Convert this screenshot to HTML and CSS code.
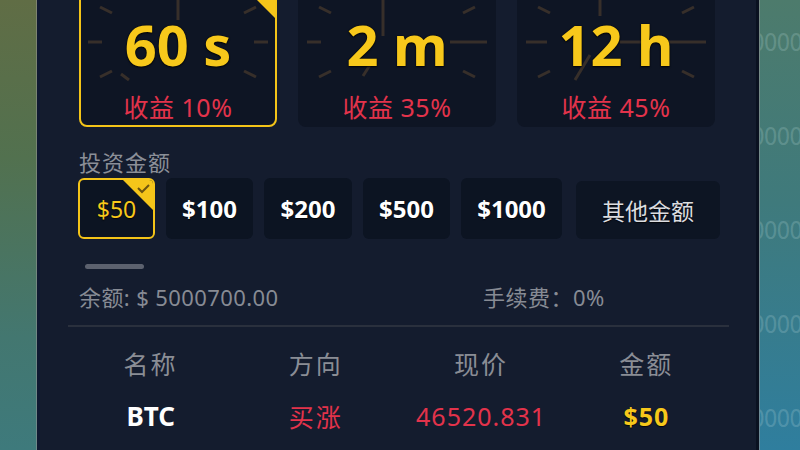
FILE: index.html
```html
<!DOCTYPE html>
<html lang="zh-CN">
<head>
<meta charset="utf-8">
<title>交易</title>
<link rel="stylesheet" href="styles.css">
</head>
<body>
<div class="stage">
  <div class="bg-left"></div>
  <main class="panel">
    <section class="periods">
      <div class="period active">
        <svg class="dial" viewBox="0 0 198 155" width="198" height="155">
          <g class="ticks">
            <line x1="189" y1="70" x2="175" y2="70"/><line x1="177" y1="105" x2="165" y2="99"/>
            <line x1="21" y1="105" x2="33" y2="99"/><line x1="9" y1="70" x2="23" y2="70"/>
            <line x1="21" y1="35" x2="33" y2="41"/><line x1="54" y1="9" x2="61" y2="20"/>
            <line x1="144" y1="9" x2="137" y2="20"/><line x1="177" y1="35" x2="165" y2="41"/>
            <line x1="99" y1="24" x2="99" y2="48"/><line x1="50" y1="108" x2="42" y2="102"/>
          </g>
        </svg>
        <span class="corner big"><svg viewBox="0 0 44 44" width="44" height="44"><polygon points="0,0 44,0 44,44"/><polyline points="24,10 29,15 38,6"/></svg></span>
        <div class="p-label">到期时间</div>
        <div class="p-time">60 s</div>
        <div class="p-rate">收益 10%</div>
      </div>
      <div class="period">
        <svg class="dial" viewBox="0 0 198 155" width="198" height="155">
          <g class="ticks">
            <line x1="189" y1="70" x2="152" y2="70"/><line x1="177" y1="105" x2="165" y2="99"/>
            <line x1="21" y1="105" x2="33" y2="99"/><line x1="9" y1="70" x2="23" y2="70"/>
            <line x1="21" y1="35" x2="33" y2="41"/><line x1="54" y1="9" x2="61" y2="20"/>
            <line x1="144" y1="9" x2="137" y2="20"/><line x1="177" y1="35" x2="165" y2="41"/>
            <line x1="85" y1="20" x2="85" y2="64"/><line x1="72" y1="93" x2="65" y2="104"/>
          </g>
        </svg>
        <div class="p-label">到期时间</div>
        <div class="p-time">2 m</div>
        <div class="p-rate">收益 35%</div>
      </div>
      <div class="period">
        <svg class="dial" viewBox="0 0 198 155" width="198" height="155">
          <g class="ticks">
            <line x1="189" y1="70" x2="150" y2="70"/><line x1="177" y1="105" x2="165" y2="99"/>
            <line x1="21" y1="105" x2="33" y2="99"/><line x1="9" y1="70" x2="30" y2="70"/>
            <line x1="21" y1="35" x2="33" y2="41"/><line x1="54" y1="9" x2="61" y2="20"/>
            <line x1="144" y1="9" x2="137" y2="20"/><line x1="177" y1="35" x2="165" y2="41"/>
            <line x1="83" y1="20" x2="83" y2="44"/><line x1="103" y1="70" x2="138" y2="70"/>
            <line x1="73" y1="83" x2="58" y2="108"/>
          </g>
        </svg>
        <div class="p-label">到期时间</div>
        <div class="p-time">12 h</div>
        <div class="p-rate">收益 45%</div>
      </div>
    </section>

    <div class="sec-label">投资金额</div>
    <div class="amounts">
      <button class="amt active w77">$50<span class="corner small"><svg viewBox="0 0 30 30" width="30" height="30"><polygon points="0,0 30,0 30,30"/><polyline points="15,8 19,12 26,5"/></svg></span></button>
      <button class="amt w87">$100</button>
      <button class="amt w88">$200</button>
      <button class="amt w87">$500</button>
      <button class="amt w101">$1000</button>
      <button class="amt other">其他金额</button>
    </div>

    <div class="slider"></div>

    <div class="info">
      <span class="balance">余额: $ 5000700.00</span>
      <span class="fee">手续费：0%</span>
    </div>

    <div class="sep"></div>

    <div class="table">
      <div class="th">名称</div>
      <div class="th">方向</div>
      <div class="th">现价</div>
      <div class="th">金额</div>
      <div class="td name">BTC</div>
      <div class="td up">买涨</div>
      <div class="td price">46520.831</div>
      <div class="td amount">$50</div>
    </div>
  </main>
  <div class="bg-right">
    <div class="ghost">0000000</div>
    <div class="ghost">0000000</div>
    <div class="ghost">0000000</div>
    <div class="ghost">0000000</div>
    <div class="ghost">0000000</div>
  </div>
</div>
</body>
</html>
```

FILE: styles.css
```css
* { box-sizing: border-box; }

html, body {
  margin: 0;
  padding: 0;
  width: 800px;
  height: 450px;
  overflow: hidden;
  background: #141c2d;
  font-family: "Noto Sans", "Noto Sans CJK SC", sans-serif;
}

.stage {
  display: flex;
  width: 800px;
  height: 450px;
  overflow: hidden;
}

.bg-left {
  width: 37px;
  flex: none;
  background: linear-gradient(180deg, #606d45 0%, #52714f 35%, #437770 75%, #3e7a7c 100%);
  border-right: 1px solid rgba(150, 150, 150, 0.55);
}

.bg-right {
  flex: 1;
  background: linear-gradient(180deg, #4d7b6c 0%, #3f7a7c 45%, #2f7e9e 100%);
  border-left: 1px solid rgba(150, 150, 150, 0.6);
  overflow: hidden;
  display: flex;
  flex-direction: column;
}

.ghost {
  height: 94px;
  line-height: 94px;
  margin-left: -9px;
  font-family: "DejaVu Sans", sans-serif;
  font-stretch: condensed;
  font-size: 24px;
  color: rgba(210, 235, 235, 0.2);
  white-space: nowrap;
  letter-spacing: -1px;
}
.ghost:first-child { margin-top: -4px; }

.panel {
  width: 722px;
  flex: none;
  height: 450px;
  background: #141c2e;
  border-left: 3px solid #0f1931;
  border-right: 3px solid #0a1120;
  padding: 0 27px 0 28px;
  display: flex;
  flex-direction: column;
  overflow: hidden;
}

/* period cards */
.periods {
  display: grid;
  grid-template-columns: repeat(3, 198px);
  column-gap: 21px;
  margin: -28px 0 0 11px;
}

.period {
  position: relative;
  height: 155px;
  border-radius: 8px;
  background: #0e1524;
  display: flex;
  flex-direction: column;
  align-items: center;
  padding-top: 6px;
  overflow: hidden;
}
.period.active {
  border: 2px solid #f4c418;
  padding-top: 4px;
}

.dial {
  position: absolute;
  left: 0;
  top: 0;
}
.period.active .dial { left: -2px; top: -2px; }
.ticks line {
  stroke: #372f2a;
  stroke-width: 3;
}

.corner {
  position: absolute;
  top: 0;
  right: 0;
  line-height: 0;
}
.corner svg polygon { fill: #f5c51a; }
.corner svg polyline {
  fill: none;
  stroke: #6d5410;
  stroke-width: 2;
}

.p-label {
  position: relative;
  font-size: 20px;
  line-height: 26px;
  color: #8d9099;
}

.p-time {
  position: relative;
  margin-top: 12px;
  font-size: 56px;
  line-height: 56px;
  font-weight: 700;
  color: #f7c81b;
  text-shadow: 0 1px 2px rgba(0, 0, 0, 0.9), 0 0 1px #000;
}

.p-rate {
  position: relative;
  margin-top: 20px;
  font-size: 25px;
  line-height: 30px;
  letter-spacing: 0.5px;
  color: #e3334b;
}

/* amounts */
.sec-label {
  margin: 21px 0 0 11px;
  font-size: 22px;
  line-height: 28px;
  letter-spacing: 1px;
  color: #8b8f98;
}

.amounts {
  display: flex;
  align-items: flex-end;
  gap: 11px;
  margin: 2px 0 0 10px;
  height: 61px;
}

.amt {
  position: relative;
  height: 61px;
  border: none;
  border-radius: 6px;
  background: #0c1422;
  color: #ffffff;
  font-family: "Noto Sans", "Noto Sans CJK SC", sans-serif;
  font-size: 24px;
  font-weight: 700;
  padding: 0;
  display: flex;
  align-items: center;
  justify-content: center;
  overflow: hidden;
  text-shadow: 0 1px 1px rgba(0, 0, 0, 0.8);
}
.w77 { width: 77px; }
.w87 { width: 87px; }
.w88 { width: 88px; }
.w101 { width: 101px; }

.amt.active {
  border: 2px solid #f4c418;
  color: #f7c81b;
  font-weight: 400;
  font-size: 23px;
}

.amt.other {
  width: 144px;
  height: 58px;
  margin-left: 3px;
  font-weight: 400;
  font-size: 23px;
  color: #dcdde0;
  background: #0d1523;
}

.slider {
  margin: 25px 0 0 17px;
  width: 59px;
  height: 5px;
  border-radius: 3px;
  background: #5c616e;
}

.info {
  display: flex;
  margin: 13px 0 0 11px;
  font-size: 22px;
  line-height: 30px;
  color: #878b94;
}
.balance { width: 404px; letter-spacing: 0.4px; }
.fee { letter-spacing: 0.5px; }

.sep {
  margin-top: 13px;
  height: 2px;
  background: #2a303d;
}

.table {
  margin-top: 9px;
  display: grid;
  grid-template-columns: repeat(4, 1fr);
  grid-auto-rows: 53px;
  align-items: center;
  justify-items: center;
}

.th {
  font-size: 25px;
  color: #8a8d95;
  letter-spacing: 2px;
}

.td {
  font-size: 25px;
}
.td.name { color: #ffffff; font-weight: 700; font-size: 26px; }
.td.up { color: #e3334b; letter-spacing: 2px; }
.td.price { color: #e3334b; letter-spacing: 1px; }
.td.amount { color: #f7c81b; font-weight: 700; letter-spacing: 1px; text-shadow: 0 1px 1px rgba(0,0,0,0.8); }
```
